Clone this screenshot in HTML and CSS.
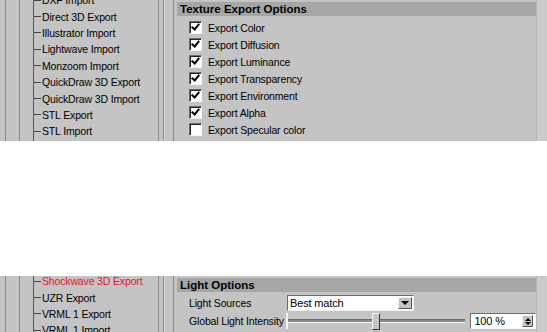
FILE: index.html
```html
<!DOCTYPE html>
<html lang="en">
  <head>
    <meta charset="UTF-8" />
    <title>Export Options</title>
    <link rel="stylesheet" href="styles.css">
  </head>
  <body>
    <!-- texture export panel -->
    <div class="shot shot-top">
      <div class="tree">
        <div class="tree-rail"></div>
        <ul class="tree-list list-top">
          <li>DXF Import</li>
          <li>Direct 3D Export</li>
          <li>Illustrator Import</li>
          <li>Lightwave Import</li>
          <li>Monzoom Import</li>
          <li>QuickDraw 3D Export</li>
          <li>QuickDraw 3D Import</li>
          <li>STL Export</li>
          <li>STL Import</li>
        </ul>
      </div>
      <div class="gutter"><div class="gutter-line"></div></div>
      <div class="options">
        <div class="opt-head">Texture Export Options</div>
        <div class="checks">
          <div class="check-row"><span class="box on"></span>Export Color</div>
          <div class="check-row"><span class="box on"></span>Export Diffusion</div>
          <div class="check-row"><span class="box on"></span>Export Luminance</div>
          <div class="check-row"><span class="box on"></span>Export Transparency</div>
          <div class="check-row"><span class="box on"></span>Export Environment</div>
          <div class="check-row"><span class="box on"></span>Export Alpha</div>
          <div class="check-row"><span class="box"></span>Export Specular color</div>
        </div>
      </div>
      <div class="side"></div>
    </div>

    <!-- light options panel -->
    <div class="shot shot-bottom">
      <div class="tree">
        <div class="tree-rail"></div>
        <ul class="tree-list list-bottom">
          <li class="active">Shockwave 3D Export</li>
          <li>UZR Export</li>
          <li>VRML 1 Export</li>
          <li>VRML 1 Import</li>
        </ul>
      </div>
      <div class="gutter"><div class="gutter-line"></div></div>
      <div class="options">
        <div class="opt-head">Light Options</div>
        <div class="field-row">
          <span class="field-label">Light Sources</span>
          <div class="select">
            <span class="select-text">Best match</span>
            <span class="select-btn"><span class="arrow"></span></span>
          </div>
        </div>
        <div class="field-row row-slider">
          <span class="field-label">Global Light Intensity</span>
          <div class="slider">
            <div class="track"></div>
            <div class="thumb"></div>
          </div>
          <div class="spin">
            <span class="spin-text">100 %</span>
            <span class="spin-btn"><span class="up"></span><span class="down"></span></span>
          </div>
        </div>
      </div>
      <div class="side"></div>
    </div>
  </body>
</html>
```

FILE: styles.css
```css
body {
  margin: 0;
  background-color: #ffffff;
  font-family: "Liberation Sans", Arial, sans-serif;
  font-size: 10.5px;
  letter-spacing: -0.15px;
  color: #000;
}

.shot {
  display: flex;
  background-color: #c4c4c4;
  overflow: hidden;
}

.shot-top {
  height: 141px;
}

.shot-bottom {
  height: 56px;
  margin-top: 135px;
}

/* left tree */
.tree {
  width: 158px;
  display: flex;
  border-right: 1px solid #8c8c8c;
}

.tree-rail {
  width: 13px;
  margin-left: 5px;
  border-left: 1px solid #8a8a8a;
  border-right: 1px solid #8a8a8a;
}

.tree-list {
  list-style: none;
  margin: 0 0 0 13px;
  padding: 0;
  border-left: 1px solid #555;
}

.list-top {
  margin-top: -8px;
}

.list-bottom {
  margin-top: -3px;
}

.tree-list li {
  height: 16.4px;
  line-height: 16px;
  white-space: nowrap;
  display: flex;
  align-items: center;
}

.tree-list li::before {
  content: "";
  width: 7px;
  border-top: 1px solid #444;
  margin-right: 1px;
}

.tree-list li.active {
  color: #e8141c;
}

.gutter {
  width: 18px;
  padding-left: 4px;
  box-sizing: border-box;
}

.gutter-line {
  width: 9px;
  height: 100%;
  border-left: 1px solid #8c8c8c;
  border-right: 1px solid #8c8c8c;
  box-shadow: inset 1px 0 0 #dcdcdc;
}

/* right options */
.options {
  width: 359px;
  padding-top: 2px;
}

.opt-head {
  height: 14px;
  line-height: 14px;
  background-color: #a6a6a6;
  font-weight: bold;
  font-size: 11.5px;
  letter-spacing: 0;
  padding-left: 3px;
}

.checks {
  padding: 3px 0 0 12px;
}

.check-row {
  display: flex;
  align-items: center;
  height: 17px;
}

.box {
  width: 11px;
  height: 11px;
  background-color: #fff;
  border: 1px solid;
  border-color: #6c6c6c #f4f4f4 #f4f4f4 #6c6c6c;
  box-shadow: inset 1px 1px 0 #222;
  margin-right: 6px;
  position: relative;
}

.box.on::after {
  content: "";
  position: absolute;
  left: 3px;
  top: 0px;
  width: 3px;
  height: 6px;
  border: solid #000;
  border-width: 0 2px 2px 0;
  transform: rotate(40deg);
}

.side {
  flex: 1;
  background-color: #cbcbcb;
  border-left: 1px solid #b4b4b4;
}

/* light options fields */
.field-row {
  display: flex;
  align-items: center;
  padding-left: 12px;
  margin-top: 3px;
  height: 16px;
}

.row-slider {
  margin-top: 2px;
}

.field-label {
  width: 98px;
  white-space: nowrap;
}

.select {
  width: 125px;
  height: 14px;
  background-color: #fff;
  border: 1px solid;
  border-color: #6c6c6c #f4f4f4 #f4f4f4 #6c6c6c;
  display: flex;
  align-items: center;
}

.select-text {
  flex: 1;
  padding-left: 2px;
  font-size: 11px;
}

.select-btn {
  width: 14px;
  height: 12px;
  margin-right: 1px;
  background-color: #c4c4c4;
  border: 1px solid;
  border-color: #f4f4f4 #555 #555 #f4f4f4;
  box-sizing: border-box;
  display: flex;
  align-items: center;
  justify-content: center;
}

.arrow {
  border-left: 4px solid transparent;
  border-right: 4px solid transparent;
  border-top: 4px solid #000;
}

.slider {
  width: 180px;
  height: 16px;
  position: relative;
  border-left: 2px solid #f4f4f4;
  box-sizing: border-box;
}

.track {
  margin-top: 6px;
  height: 2px;
  border-top: 1px solid #6c6c6c;
  border-bottom: 1px solid #f4f4f4;
  background-color: #8c8c8c;
}

.thumb {
  position: absolute;
  left: 84px;
  top: 0;
  width: 6px;
  height: 15px;
  background-color: #c4c4c4;
  border: 1px solid;
  border-color: #f4f4f4 #333 #333 #f4f4f4;
}

.spin {
  width: 64px;
  height: 14px;
  margin-left: 5px;
  background-color: #fff;
  border: 1px solid;
  border-color: #6c6c6c #f4f4f4 #f4f4f4 #6c6c6c;
  display: flex;
  align-items: center;
}

.spin-text {
  flex: 1;
  padding-left: 3px;
  font-size: 11px;
}

.spin-btn {
  width: 11px;
  height: 12px;
  margin-right: 2px;
  background-color: #c4c4c4;
  border: 1px solid;
  border-color: #f4f4f4 #555 #555 #f4f4f4;
  box-sizing: border-box;
  display: flex;
  flex-direction: column;
  align-items: center;
  justify-content: center;
  gap: 1px;
}

.up {
  border-left: 3px solid transparent;
  border-right: 3px solid transparent;
  border-bottom: 3px solid #000;
}

.down {
  border-left: 3px solid transparent;
  border-right: 3px solid transparent;
  border-top: 3px solid #000;
}
```
